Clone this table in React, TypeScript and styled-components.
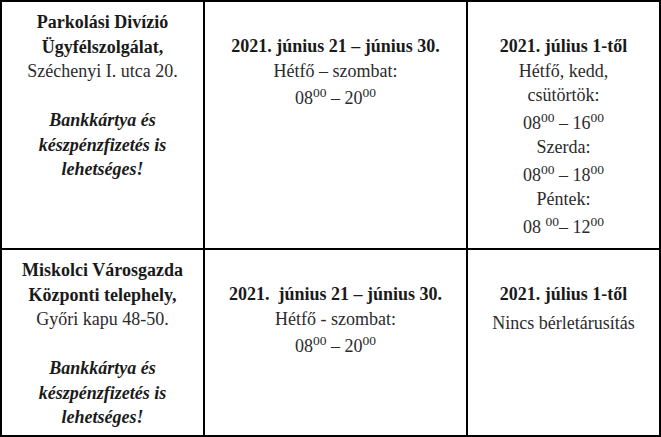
import React from "react";
import styled, { createGlobalStyle } from "styled-components";

const Line = styled.div<{ $weight?: "bold" | "normal"; $italic?: boolean; $gap?: number }>`
  font-family: "Liberation Serif", "Times New Roman", serif;
  font-size: 18px;
  line-height: 24.5px;
  font-weight: ${(p) => p.$weight ?? "normal"};
  font-style: ${(p) => (p.$italic ? "italic" : "normal")};
  margin-top: ${(p) => p.$gap ?? 0}px;
  color: ${(p) => (p.$weight === "bold" ? "#1a1a1a" : "#2b2b2b")};
  white-space: nowrap;
`;

const Global = createGlobalStyle`
  html, body { margin: 0; padding: 0; background: #fff; }
`;

const Table = styled.div`
  display: grid;
  grid-template-columns: 201px 261px 191px;
  grid-template-rows: 246px 185px;
  gap: 2px;
  background: #000;
  border: 2px solid #000;
  width: 657px;
`;

const Cell = styled.div<{ $lead?: boolean }>`
  background: #fff;
  text-align: center;
  padding: ${(p) => (p.$lead ? "32px" : "8px")} 2px 8px;
  box-sizing: border-box;
`;

const Sup = styled.sup`
  font-size: 0.75em;
  vertical-align: 0.5em;
  line-height: 1;
`;

const Time = ({ from, to, spaced }: { from: string; to: string; spaced?: boolean }) => (
  <Line $gap={3}>
    {from}
    {spaced ? " " : ""}
    <Sup>00</Sup>
    {spaced ? "– " : " – "}
    {to}
    <Sup>00</Sup>
  </Line>
);

const Place = ({ a, b, c }: { a: string; b: string; c: string }) => (
  <Cell>
    <Line $weight="bold">{a}</Line>
    <Line $weight="bold">{b}</Line>
    <Line>{c}</Line>
    <Line $weight="bold" $italic $gap={24.5}>Bankkártya és</Line>
    <Line $weight="bold" $italic>készpénzfizetés is</Line>
    <Line $weight="bold" $italic>lehetséges!</Line>
  </Cell>
);

export default function App() {
  return (
    <>
      <Global />
      <Table>
        <Place a="Parkolási Divízió" b="Ügyfélszolgálat," c="Széchenyi I. utca 20." />
        <Cell $lead>
          <Line $weight="bold">2021. június 21 – június 30.</Line>
          <Line>Hétfő – szombat:</Line>
          <Time from="08" to="20" />
        </Cell>
        <Cell $lead>
          <Line $weight="bold">2021. július 1-től</Line>
          <Line>Hétfő, kedd,</Line>
          <Line>csütörtök:</Line>
          <Time from="08" to="16" />
          <Line>Szerda:</Line>
          <Time from="08" to="18" />
          <Line>Péntek:</Line>
          <Time from="08" to="12" spaced />
        </Cell>
        <Place a="Miskolci Városgazda" b="Központi telephely," c="Győri kapu 48-50." />
        <Cell $lead>
          <Line $weight="bold">2021.&nbsp; június 21 – június 30.</Line>
          <Line>Hétfő - szombat:</Line>
          <Time from="08" to="20" />
        </Cell>
        <Cell $lead>
          <Line $weight="bold">2021. július 1-től</Line>
          <Line $gap={4.5}>Nincs bérletárusítás</Line>
        </Cell>
      </Table>
    </>
  );
}
